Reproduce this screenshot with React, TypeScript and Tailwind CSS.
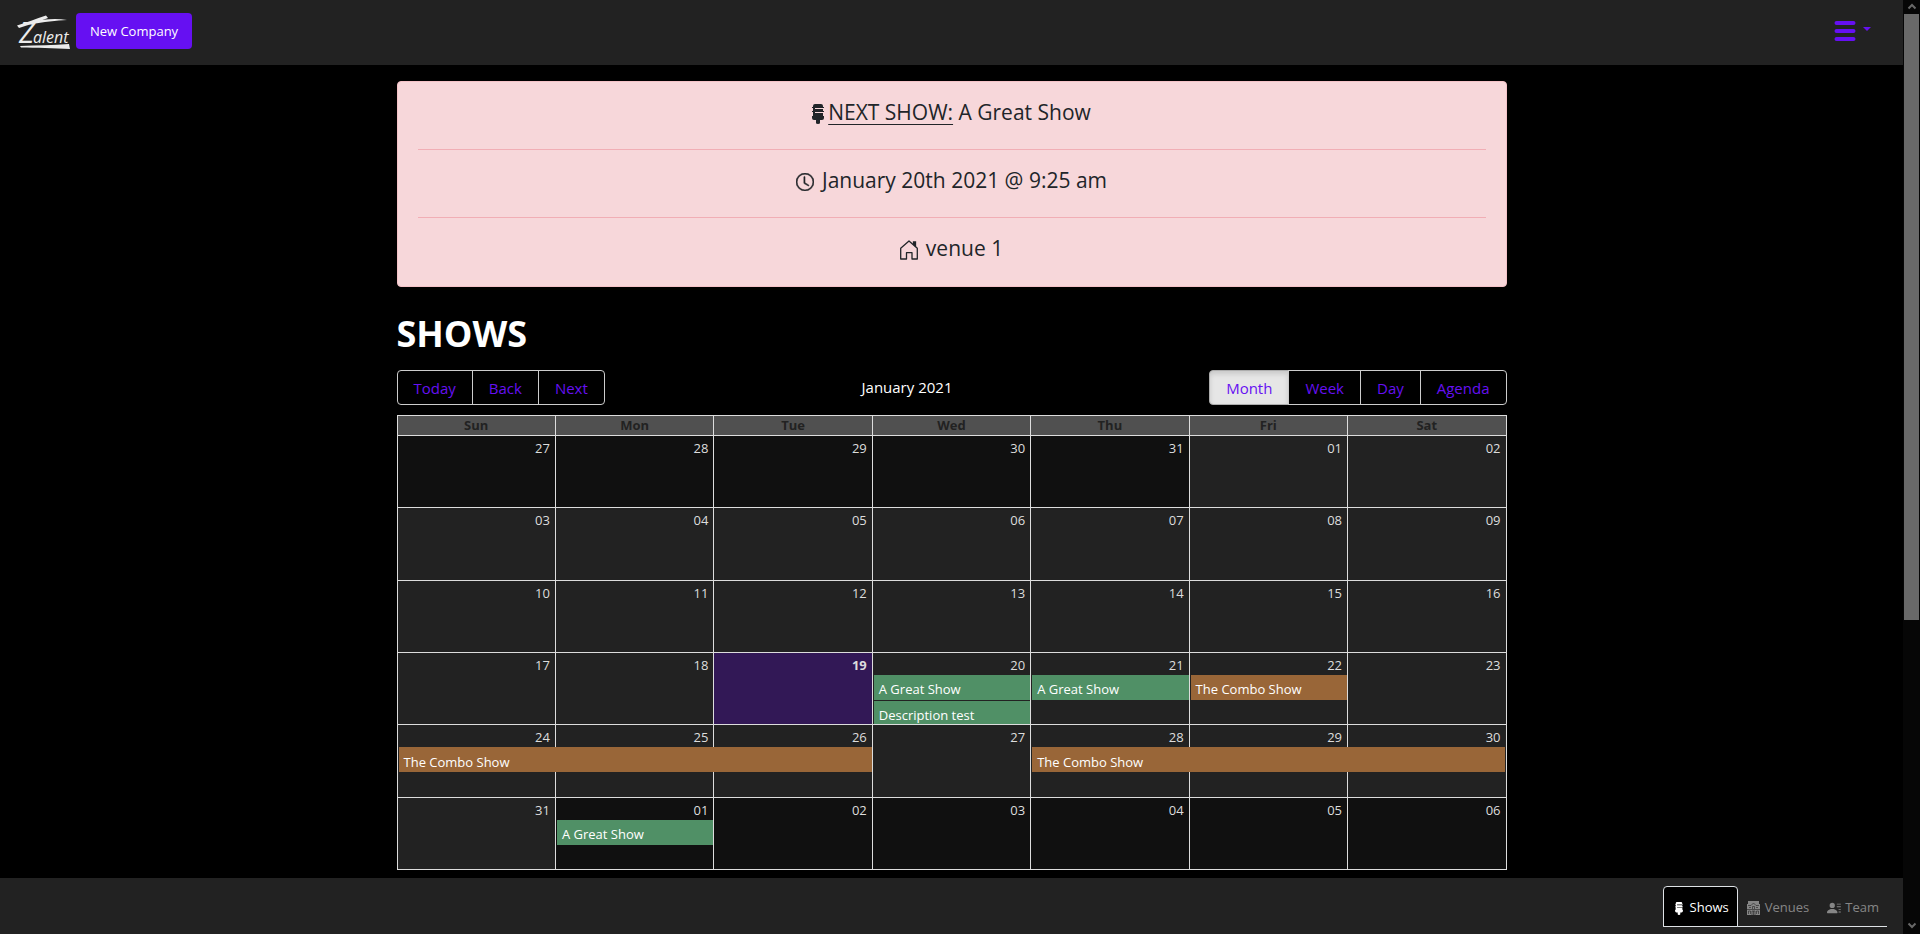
import { BsClock, BsPersonLinesFill } from "react-icons/bs";

type ShowEvent = { title: string; span: number; color: "green" | "brown" };
type Day = { label: string; tone: "off" | "in" | "today"; events?: ShowEvent[] };

const weekdays = ["Sun", "Mon", "Tue", "Wed", "Thu", "Fri", "Sat"];

const events: Record<string, ShowEvent[]> = {
  "3-20": [
    { title: "A Great Show", span: 1, color: "green" },
    { title: "Description test", span: 1, color: "green" },
  ],
  "3-21": [{ title: "A Great Show", span: 1, color: "green" }],
  "3-22": [{ title: "The Combo Show", span: 1, color: "brown" }],
  "4-24": [{ title: "The Combo Show", span: 3, color: "brown" }],
  "4-28": [{ title: "The Combo Show", span: 3, color: "brown" }],
  "5-01": [{ title: "A Great Show", span: 1, color: "green" }],
};

const weeks: Day[][] = Array.from({ length: 6 }, (_, w) =>
  Array.from({ length: 7 }, (_, d) => {
    const date = new Date(2020, 11, 27 + w * 7 + d);
    const label = String(date.getDate()).padStart(2, "0");
    const inMonth = date.getMonth() === 0;
    return {
      label,
      tone: !inMonth ? "off" : label === "19" ? "today" : "in",
      events: events[`${w}-${label}`],
    };
  }),
);

const tones = { off: "bg-[#101010]", in: "bg-[#222222]", today: "bg-[#321856] font-bold" };
const eventColors = { green: "bg-[#509066]", brown: "bg-[#996638]" };

function Logo() {
  return (
    <svg viewBox="0 -8 56 44" className="h-11 w-14" role="img" aria-label="Zalent">
      <g fill="#ececec">
        <path d="M1 8.500 C10 5.500 20 2 30 -1.500 L32 1 C22 5 12 8 3 11 Z" />
        <path d="M14 5 C28 2 40 1 51 3 C41 3.500 27 5 15 7.500 Z" />
        <path d="M4 29 C20 28.500 38 28 53 27 L54 32 C38 31 20 31 5 30.500 Z" />
      </g>
      <g fill="#ececec" fontFamily="'Open Sans', sans-serif" fontStyle="italic">
        <text x="3" y="26" fontSize="29" fontWeight="500">Z</text>
        <text x="17" y="26" fontSize="16" fontWeight="500">alent</text>
      </g>
    </svg>
  );
}

function MicIcon({ className }: { className: string }) {
  return (
    <svg viewBox="0 0 12 20" className={className} fill="currentColor" aria-hidden="true">
      <path d="M3 0h6q2 0 2 2v1h1v1H3v1h8v2h1v1H3v1h8v2H1V8H0V7h1V4H0V3h1V2q0-2 2-2z" />
      <path d="M0 12h12v2q0 2-2 2H8v3q0 1-2 1t-2-1v-3H2q-2 0-2-2z" />
      <path d="M1 10h10v3H1z" />
    </svg>
  );
}

function HouseIcon() {
  return (
    <svg viewBox="0 0 18 20" className="mr-2 inline-block h-5 w-[18px]" fill="none" stroke="currentColor" strokeWidth="1.3" aria-hidden="true">
      <path d="M.7 8.2 9 1l8.300 7.200V19h-5.300v-6.300H6.500V19H.700z" strokeLinejoin="round" />
      <path d="M13.500 2h2v4l-2-1.700z" fill="currentColor" />
    </svg>
  );
}

function VenueIcon() {
  return (
    <svg viewBox="0 0 13 14" className="h-[14px] w-[13px]" aria-hidden="true">
      <path d="M1 0h11v3h1v11H0V3h1z" fill="#868686" />
      <g stroke="#222" strokeWidth=".6" fill="none">
        <path d="M1 4.500h3L6.500 2 9 4.500h3M0 8.500h13M2 6.500h2M9 6.500h2M5.500 8V5.500h2V8" />
        <path d="M1.500 13v-3h2v3M9.500 13v-3h2v3M5 14v-4h3v4M6.500 10v4" />
      </g>
    </svg>
  );
}

function ButtonGroup({ labels, active }: { labels: string[]; active?: string }) {
  return (
    <div className="flex">
      {labels.map((label) => (
        <button
          key={label}
          type="button"
          className={`-ml-px h-[35px] border px-4 text-[15px] leading-5 text-[#6610f2] first:ml-0 first:rounded-l last:rounded-r ${
            label === active
              ? "border-[#adadad] bg-[#e6e6e6] shadow-[inset_0_3px_5px_rgba(0,0,0,0.125)]"
              : "border-[#cccccc]"
          }`}
        >
          {label}
        </button>
      ))}
    </div>
  );
}

function Calendar() {
  return (
    <table className="mt-[10px] h-[455px] w-full table-fixed border-collapse text-[13px] text-[#dddddd]">
      <thead>
        <tr className="h-5 bg-[#505050] text-[#222222]">
          {weekdays.map((day) => (
            <th key={day} className="border border-[#dddddd] p-0 leading-[19px] font-bold">
              {day}
            </th>
          ))}
        </tr>
      </thead>
      <tbody>
        {weeks.map((week, w) => (
          <tr key={w}>
            {week.map((day) => (
              <td key={day.label} className={`border border-[#dddddd] p-0 align-top ${tones[day.tone]}`}>
                <div className="flex h-[71px] flex-col gap-px overflow-y-clip">
                  <a href="#day" className="block h-[21px] shrink-0 pt-[3px] pr-[5px] text-right leading-[18px]">
                    {day.label}
                  </a>
                  {day.events?.map((event) => (
                    <button
                      key={event.title}
                      type="button"
                      className={`relative z-10 ml-px h-[25px] shrink-0 px-[5px] pt-1 text-left leading-5 text-white ${eventColors[event.color]}`}
                      style={{ width: `calc(${event.span * 100}% + ${event.span - 2}px)` }}
                    >
                      {event.title}
                    </button>
                  ))}
                </div>
              </td>
            ))}
          </tr>
        ))}
      </tbody>
    </table>
  );
}

function Scrollbar() {
  return (
    <div className="flex w-[17px] shrink-0 flex-col items-center bg-[#060606] text-[#686868]" aria-hidden="true">
      <svg viewBox="0 0 17 14" className="h-[14px] w-[17px]" fill="none" stroke="currentColor" strokeWidth="2">
        <path d="M5.500 8.500 9 5l3.500 3.500" />
      </svg>
      <div className="h-[606px] w-[15px] bg-[#696969]" />
      <div className="flex-1" />
      <svg viewBox="0 0 17 17" className="h-[17px] w-[17px]" fill="none" stroke="currentColor" strokeWidth="2">
        <path d="M5.500 6.500 9 10l3.500-3.500" />
      </svg>
    </div>
  );
}

export default function App() {
  return (
    <div className="flex h-screen bg-black font-['Open_Sans',sans-serif] text-white">
      <div className="flex min-w-0 flex-1 flex-col">
        <header className="flex h-[65px] shrink-0 items-center justify-between bg-[#222222] pr-8 pb-1 pl-4">
          <div className="flex items-center gap-1">
            <a href="#home">
              <Logo />
            </a>
            <button type="button" className="h-9 w-[116px] rounded bg-[#6610f2] pt-[3px] text-[13px]">
              New Company
            </button>
          </div>
          <button type="button" aria-label="Menu" className="flex items-center gap-[7px] text-[#6610f2]">
            <svg viewBox="0 0 22 22" className="h-[22px] w-[22px]" stroke="currentColor" strokeWidth="4" strokeLinecap="round">
              <path d="M2.500 3h17M2.500 11h17M2.500 19h17" />
            </svg>
            <svg viewBox="0 0 8 4" className="mb-1 h-1 w-2" fill="currentColor">
              <path d="M0 0h8L4 4z" />
            </svg>
          </button>
        </header>

        <main className="mx-auto w-full max-w-[1110px] flex-1 pt-4">
          <section className="rounded border border-[#f5c2c7] bg-[#f7d7da] px-5 pt-[13px] pb-5 text-center text-[21px] leading-[35px] text-[#212529]">
            <p>
              <MicIcon className="inline-block h-5 w-3" />
              <span className="ml-1 underline decoration-1 underline-offset-4">NEXT SHOW:</span> A Great Show
            </p>
            <hr className="mt-[19px] mb-[13px] border-[#f1aeb5]" />
            <p>
              <BsClock className="mr-2 inline-block h-[18px] w-[18px]" strokeWidth="0.5" />
              January 20th 2021 @ 9:25 am
            </p>
            <hr className="mt-[19px] mb-[13px] border-[#f1aeb5]" />
            <p>
              <HouseIcon />
              venue 1
            </p>
          </section>

          <h1 className="mt-6 mb-[13px] text-4xl leading-[46px] font-bold">SHOWS</h1>

          <div className="flex items-center">
            <ButtonGroup labels={["Today", "Back", "Next"]} />
            <span className="flex-1 text-center text-[15px]">January 2021</span>
            <ButtonGroup labels={["Month", "Week", "Day", "Agenda"]} active="Month" />
          </div>

          <Calendar />
        </main>

        <footer className="flex h-14 shrink-0 items-start justify-end bg-[#222222] pt-2 pr-4">
          <nav className="flex h-[41px] border-b border-[#dee2e6] text-[13px] text-[#868686]">
            <a href="#shows" className="-mb-px flex items-center gap-[7px] rounded-t border border-[#dee2e6] bg-black pt-[3px] pr-2 pl-[11px] text-white">
              <MicIcon className="h-[13px] w-2" />
              Shows
            </a>
            <a href="#venues" className="flex items-center gap-[5px] px-[9px] pt-[3px]">
              <VenueIcon />
              Venues
            </a>
            <a href="#team" className="flex items-center gap-1 pt-[3px] pr-2 pl-[9px]">
              <BsPersonLinesFill className="h-[14px] w-[14px]" />
              Team
            </a>
          </nav>
        </footer>
      </div>
      <Scrollbar />
    </div>
  );
}
